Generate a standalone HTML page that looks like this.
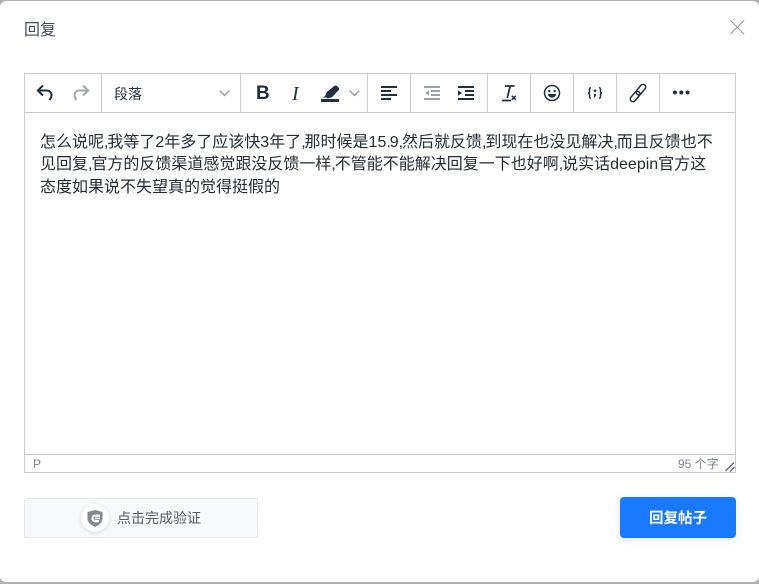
<!DOCTYPE html>
<html lang="zh"><head><meta charset="utf-8">
<style>
html,body{margin:0;padding:0;width:759px;height:584px;overflow:hidden;background:#b0b0b0}
body{font-family:"Liberation Sans","Noto Sans CJK SC",sans-serif;position:relative}
#modal{position:absolute;left:0;top:1px;width:759px;height:581px;background:#fff;border-radius:6px}
.a{position:absolute;white-space:nowrap}
.sep{position:absolute;top:74px;width:1px;height:38px;background:#ccc}
.ln{position:absolute;left:40px;font-size:16px;line-height:22px;color:#262b33;white-space:nowrap}
.ln b{font-weight:normal;letter-spacing:-1.100px}
svg{position:absolute;overflow:visible}
</style></head><body>
<div id="modal"></div>
<div class="a" style="left:24px;top:21px;font-size:16px;line-height:20px;color:#444c58">回复</div>
<svg style="left:730px;top:20px" width="14" height="14"><path d="M.5.5l13.500 13.500M14 .5L.5 14" stroke="#999" stroke-width="1" fill="none"/></svg>

<div class="a" style="left:24px;top:73px;width:710px;height:398px;border:1px solid #ccc"></div>
<div class="a" style="left:25px;top:112px;width:710px;height:1px;background:#ccc"></div>
<div class="a" style="left:25px;top:454px;width:710px;height:1px;background:#ccc"></div>
<div class="sep" style="left:101px"></div><div class="sep" style="left:240px"></div><div class="sep" style="left:367px"></div><div class="sep" style="left:410px"></div><div class="sep" style="left:487px"></div><div class="sep" style="left:530px"></div><div class="sep" style="left:573px"></div><div class="sep" style="left:616px"></div><div class="sep" style="left:659px"></div>

<svg style="left:36px;top:84px" width="18" height="18"><path d="M7 1.500L1.800 6.500 7 11.500M2 6.500h8.500c3 0 5 2 5 4.500 0 2-.8 3.500-2 5" fill="none" stroke="#222f3e" stroke-width="2"/></svg>
<svg style="left:72px;top:84px" width="18" height="18"><path d="M11 1.500l5.200 5-5.200 5M16 6.500H7.500c-3 0-5 2-5 4.500 0 2 .8 3.500 2 5" fill="none" stroke="#a1a6ad" stroke-width="2"/></svg>
<div class="a" style="left:114px;top:84px;font-size:14px;line-height:20px;color:#222f3e">段落</div>
<svg style="left:219px;top:90px" width="11" height="7"><path d="M.7.700l4.800 4.800L10.300.700" fill="none" stroke="#8c939b" stroke-width="1.300"/></svg>

<div class="a" style="left:256px;top:82px;font:bold 19px/24px 'Liberation Sans',sans-serif;color:#222f3e">B</div>
<div class="a" style="left:292px;top:82px;font:italic 20px/24px 'Liberation Serif',serif;color:#222f3e">I</div>
<svg style="left:321px;top:85px" width="20" height="18"><path d="M1 12.500l3-1.200 1.800-4.300 7.500-6c1-.8 2.100-.7 3 .2l1.300 1.400c.8.900.7 2.100-.2 2.900l-6.500 6.800-4.300 1.200-1.200-1z" fill="#222f3e"/><rect x="0" y="14" width="18" height="3" fill="#222f3e"/></svg>
<svg style="left:349px;top:90px" width="11" height="7"><path d="M.7.700l4.800 4.800L10.300.700" fill="none" stroke="#8c939b" stroke-width="1.300"/></svg>

<svg style="left:381px;top:86px" width="16" height="14"><path d="M0 1h16M0 5h10M0 9h16M0 13h10" stroke="#222f3e" stroke-width="2"/></svg>
<svg style="left:424px;top:86px" width="16" height="14"><path d="M0 1h16M7 5h9M7 9h9M0 13h16" stroke="#9ba0a7" stroke-width="2"/><path d="M5 4.300L1 7l4 2.700z" fill="#9ba0a7"/></svg>
<svg style="left:458px;top:86px" width="16" height="14"><path d="M0 1h16M7 5h9M7 9h9M0 13h16" stroke="#222f3e" stroke-width="2"/><path d="M0 4.300L4 7 0 9.700z" fill="#222f3e"/></svg>

<svg style="left:501px;top:85px" width="16" height="17"><path d="M4 1h9.500M9.200 1L6.300 13M1 15.500h9" stroke="#222f3e" stroke-width="1.700" fill="none"/><path d="M10.800 10.800l4 4M14.800 10.800l-4 4" stroke="#222f3e" stroke-width="1.500"/></svg>
<svg style="left:543px;top:84px" width="18" height="18"><circle cx="9" cy="9" r="7.500" fill="none" stroke="#222f3e" stroke-width="1.500"/><circle cx="6.300" cy="7" r="1.200" fill="#222f3e"/><circle cx="11.700" cy="7" r="1.200" fill="#222f3e"/><path d="M4.800 10h8.400c-.4 2.300-2.100 3.700-4.200 3.700S5.200 12.300 4.800 10z" fill="#222f3e"/></svg>
<svg style="left:587px;top:87px" width="16" height="12"><path d="M4 .8C2.500.8 2.500 1.800 2.500 3v1.500C2.500 5.500 2 6 1 6c1 0 1.500.5 1.500 1.500V9c0 1.200 0 2.200 1.500 2.200M12 .8c1.500 0 1.500 1 1.500 2.200v1.500c0 1 .5 1.500 1.500 1.500-1 0-1.500.5-1.500 1.500V9c0 1.200 0 2.200-1.500 2.200" fill="none" stroke="#222f3e" stroke-width="1.500"/><circle cx="8" cy="3.800" r="1.300" fill="#222f3e"/><path d="M7 7h2v1.500L7.800 10.500H7z" fill="#222f3e"/></svg>
<svg style="left:629px;top:84px" width="18" height="18"><g transform="rotate(-50 9 9)" fill="none" stroke="#222f3e" stroke-width="1.500"><rect x="-1.500" y="6.300" width="12" height="5.400" rx="2.700"/><rect x="7.500" y="6.300" width="12" height="5.400" rx="2.700"/></g></svg>
<svg style="left:673px;top:90px" width="17" height="5"><circle cx="2" cy="2.500" r="2" fill="#222f3e"/><circle cx="8.300" cy="2.500" r="2" fill="#222f3e"/><circle cx="14.600" cy="2.500" r="2" fill="#222f3e"/></svg>

<div class="ln" style="top:132px">怎么说呢<b>,</b>我等了2年多了应该快3年了<b>,</b>那时候是15<b>.</b>9<b>,</b>然后就反馈<b>,</b>到现在也没见解决<b>,</b>而且反馈也不</div>
<div class="ln" style="top:154px">见回复<b>,</b>官方的反馈渠道感觉跟没反馈一样<b>,</b>不管能不能解决回复一下也好啊<b>,</b>说实话deepin官方这</div>
<div class="ln" style="top:177px">态度如果说不失望真的觉得挺假的</div>

<div class="a" style="left:33px;top:456px;font-size:12px;line-height:16px;color:#7b828c">P</div>
<div class="a" style="left:678px;top:456px;font-size:12px;line-height:16px;color:#7b828c">95 个字</div>
<svg style="left:725px;top:462px" width="10" height="10"><path d="M.5 9L9 .5M5 9.500L9.500 5" stroke="#667" stroke-width="1.300"/></svg>

<div class="a" style="left:24px;top:498px;width:232px;height:38px;background:#f7f9fa;border:1px solid #e4e7eb;border-radius:2px"></div>
<div class="a" style="left:81px;top:504px;width:28px;height:28px;background:#fff;border-radius:50%;box-shadow:0 1px 4px rgba(0,0,0,.12)"></div>
<svg style="left:87px;top:510px" width="16" height="17"><path d="M8 0l7.500 2v7c0 3.500-3.500 6-7.500 8-4-2-7.500-4.500-7.500-8V2z" fill="#85898f"/><path d="M13 5.700H8.200c-1.500 0-2.700 1.200-2.700 2.700s1.200 2.700 2.700 2.700H12" fill="none" stroke="#fff" stroke-width="2.200"/><path d="M8 8.400h5" stroke="#fff" stroke-width="1.600"/></svg>
<div class="a" style="left:117px;top:508px;font-size:14px;line-height:20px;color:#555b63">点击完成验证</div>

<div class="a" style="left:620px;top:497px;width:116px;height:41px;background:#1a7aff;border-radius:4px;box-shadow:0 2px 8px rgba(26,122,255,.15);color:#fff;font-size:14.500px;font-weight:bold;line-height:45px;text-align:center">回复帖子</div>
</body></html>
